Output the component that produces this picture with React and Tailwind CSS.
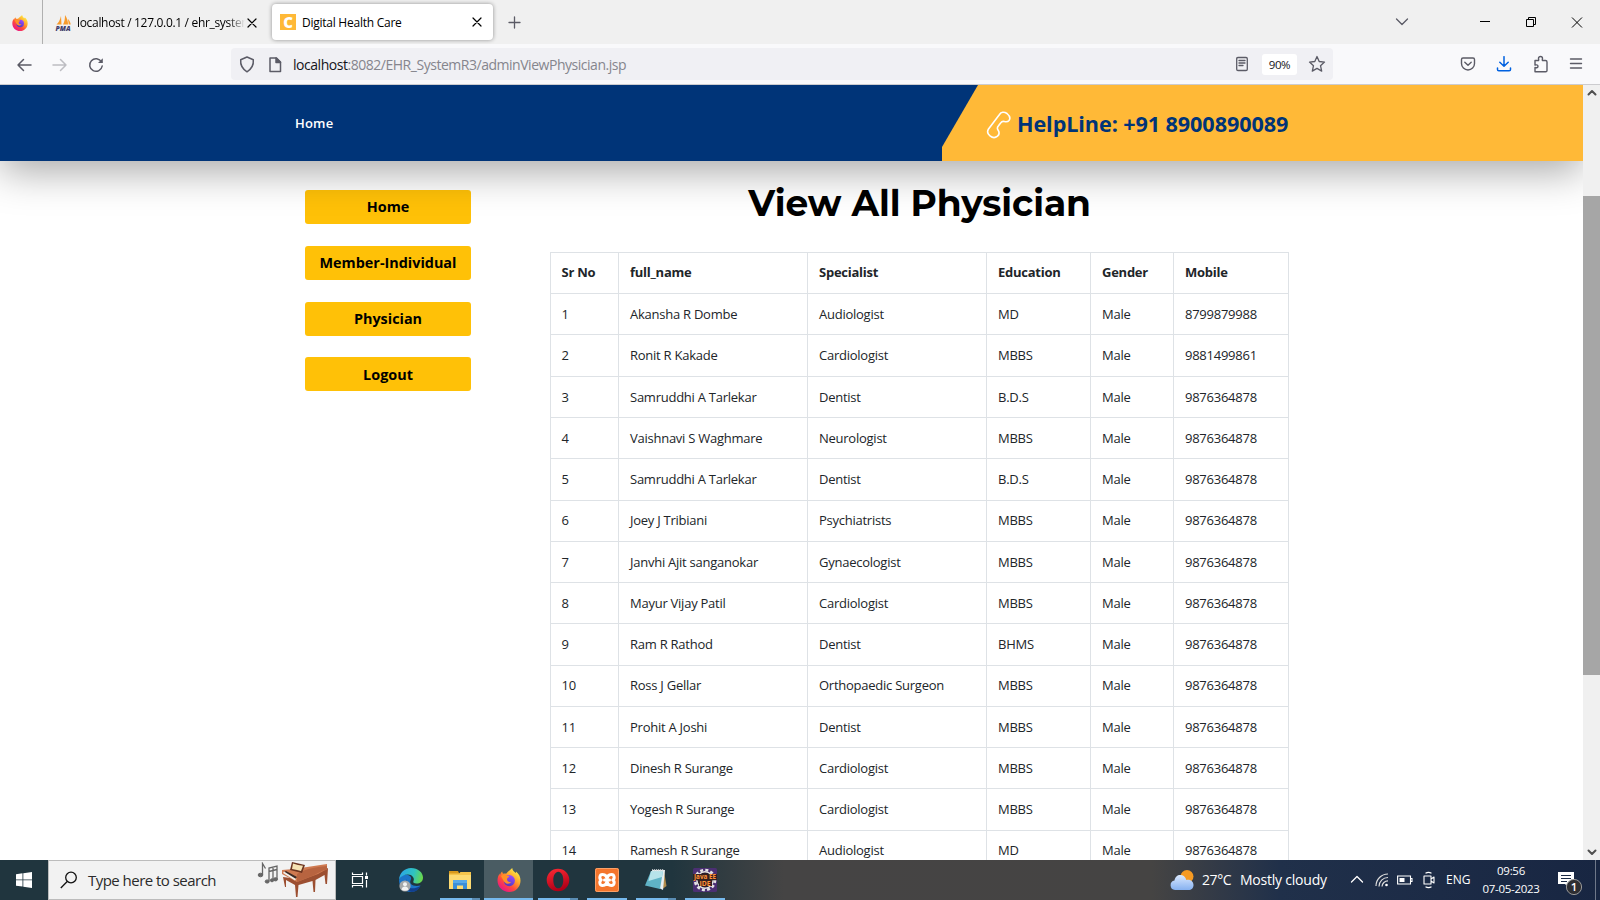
const physicians = [
  ["1", "Akansha R Dombe", "Audiologist", "MD", "Male", "8799879988"],
  ["2", "Ronit R Kakade", "Cardiologist", "MBBS", "Male", "9881499861"],
  ["3", "Samruddhi A Tarlekar", "Dentist", "B.D.S", "Male", "9876364878"],
  ["4", "Vaishnavi S Waghmare", "Neurologist", "MBBS", "Male", "9876364878"],
  ["5", "Samruddhi A Tarlekar", "Dentist", "B.D.S", "Male", "9876364878"],
  ["6", "Joey J Tribiani", "Psychiatrists", "MBBS", "Male", "9876364878"],
  ["7", "Janvhi Ajit sanganokar", "Gynaecologist", "MBBS", "Male", "9876364878"],
  ["8", "Mayur Vijay Patil", "Cardiologist", "MBBS", "Male", "9876364878"],
  ["9", "Ram R Rathod", "Dentist", "BHMS", "Male", "9876364878"],
  ["10", "Ross J Gellar", "Orthopaedic Surgeon", "MBBS", "Male", "9876364878"],
  ["11", "Prohit A Joshi", "Dentist", "MBBS", "Male", "9876364878"],
  ["12", "Dinesh R Surange", "Cardiologist", "MBBS", "Male", "9876364878"],
  ["13", "Yogesh R Surange", "Cardiologist", "MBBS", "Male", "9876364878"],
  ["14", "Ramesh R Surange", "Audiologist", "MD", "Male", "9876364878"],
];
const columns = ["Sr No", "full_name", "Specialist", "Education", "Gender", "Mobile"];

function Line({ d, className = "", w = 1.4, box = "0 0 16 16" }) {
  return (
    <svg viewBox={box} className={className} fill="none" stroke="currentColor" strokeWidth={w} strokeLinecap="round" strokeLinejoin="round">
      <path d={d} />
    </svg>
  );
}

function FirefoxLogo({ className }) {
  return (
    <svg viewBox="0 0 24 24" className={className}>
      <defs>
        <linearGradient id="ffa" x1="0.85" y1="0.1" x2="0.2" y2="0.95">
          <stop offset="0" stopColor="#fff04a" />
          <stop offset="0.35" stopColor="#ffa52a" />
          <stop offset="0.65" stopColor="#ff4a3c" />
          <stop offset="1" stopColor="#e8128a" />
        </linearGradient>
        <linearGradient id="ffb" x1="0.7" y1="0" x2="0.3" y2="1">
          <stop offset="0" stopColor="#a04bff" />
          <stop offset="1" stopColor="#4a3bc0" />
        </linearGradient>
      </defs>
      <path fill="url(#ffa)" d="M15.2 0c.3 2.500 2 3.600 3.600 5 .3-.5.300-1 .2-1.500 3 2.300 4.500 5.500 4.500 9.200C23.500 19 18.500 24 12.200 24 5.600 24 .5 19 .5 12.600c0-3 .9-5.300 2.200-7 0 .7.100 1.200.3 1.700.3-1.400 1-2.800 2.200-3.800.1 1 .4 1.700.9 2.300 1-.3 2-.3 3 0C10.600 3.600 13 2.300 15.200 0z" />
      <circle cx="12.300" cy="12.600" r="5.600" fill="url(#ffb)" />
      <path fill="#ff9226" d="M4 8.200c1.500-1.500 3.300-1.700 5-.8 1 .5 2 .6 3.300.7-.2 1.300-1.800 1.500-2.200 2.700-.3 2.500 1.700 3.700 4.200 3-1.500 2.300-4.500 2.600-6.300.8C6 13 5.500 10 4 8.200z" />
    </svg>
  );
}

function TabStrip() {
  return (
    <div className="flex h-[44px] bg-[#f0f0f0] text-[12px] text-black">
      <div className="flex w-[43px] items-center border-r border-[#b0b0b0] pt-[1px] pl-[12px]">
        <FirefoxLogo className="h-4 w-4" />
      </div>
      <div className="flex w-[229px] items-center pt-[1px] pl-[12px]">
        <svg viewBox="0 0 17 16" className="h-[16px] w-[17px] shrink-0 overflow-visible">
          <path fill="#f79a2b" d="M6 1 6.500 9.500H1.500C3.500 8 5 5 6 1zM10 0c2 3 3 6 3 9.500H8C9.500 7 10 4 10 0zM13 4c2 2 2.500 4 2.700 5.500h-2z" />
          <text x="0.500" y="15.500" fontSize="6.500" fontWeight="800" fontStyle="italic" fontFamily="Open Sans" fill="#3f3c6b" textLength="15" lengthAdjust="spacingAndGlyphs">PMA</text>
        </svg>
        <span className="ml-[5px] w-[168px] overflow-hidden whitespace-nowrap tracking-[-0.320px] [mask-image:linear-gradient(to_right,#000_90%,transparent)]">localhost / 127.0.0.1 / ehr_system</span>
        <Line className="-ml-[1px] h-[16px] w-[16px] shrink-0" w={1.2} d="M4 4l8 8M12 4l-8 8" />
      </div>
      <div className="mt-[4px] flex h-[36px] w-[221px] items-center rounded-[4px] bg-white pl-[8px] shadow-[0_0_4px_rgba(0,0,0,0.4)]">
        <span className="flex h-[16px] w-[16px] items-center justify-center bg-[#ffb937] text-[15px] leading-none font-extrabold text-white">C</span>
        <span className="ml-[6px] w-[167px] pt-[1px] whitespace-nowrap tracking-[-0.25px]">Digital Health Care</span>
        <Line className="h-[16px] w-[16px]" w={1.2} d="M4 4l8 8M12 4l-8 8" />
      </div>
      <Line className="mt-[14px] ml-[13px] h-[16px] w-[16px] text-[#5b5b66]" w={1.3} d="M8.500 3v11M3 8.500h11" />
      <Line className="mt-[14px] ml-[872px] h-[16px] w-[16px] text-[#5b5b66]" w={1.3} d="M2.500 5 8 10.500 13.500 5" />
      <svg viewBox="0 0 16 16" className="mt-[14px] ml-[67px] h-[16px] w-[16px]" stroke="#000"><path d="M3 7.500h10" /></svg>
      <svg viewBox="0 0 16 16" className="mt-[14px] ml-[30px] h-[16px] w-[16px]" stroke="#000" fill="none"><path d="M3.500 5.500h7v7h-7zM5.500 5.500v-2h7v7h-2" /></svg>
      <svg viewBox="0 0 16 16" className="mt-[14px] ml-[30px] h-[16px] w-[16px]" stroke="#000" fill="none"><path d="M3 3.500l10 10M13 3.500l-10 10" /></svg>
    </div>
  );
}

function AddressBar() {
  return (
    <div className="flex h-[41px] items-center border-b border-[#cccccf] bg-[#f9f9fb] text-[#5b5b66]">
      <Line className="mt-[1px] ml-[16px] h-[18px] w-[18px]" box="0 0 18 18" w={1.5} d="M15 9H2M7.500 3.500 2 9l5.500 5.500" />
      <Line className="mt-[1px] ml-[17px] h-[18px] w-[18px] text-[#bdbdc2]" box="0 0 18 18" w={1.5} d="M2 9h13M9.500 3.500 15 9l-5.500 5.500" />
      <svg viewBox="0 0 18 18" className="mt-[1px] ml-[18px] h-[18px] w-[18px]" fill="none" stroke="currentColor" strokeWidth="1.500">
        <path d="M14.500 6A6.300 6.300 0 1 0 15.200 10" strokeLinecap="round" />
        <path d="M15.800 2.200v4.800H11z" fill="currentColor" stroke="none" />
      </svg>
      <div className="ml-[126px] flex h-[32px] w-[1102px] items-center rounded-[4px] bg-[#f0f0f4]">
        <Line className="mt-[1px] ml-[7px] h-[18px] w-[18px]" box="0 0 18 18" w={1.5} d="M9 1 15.300 3.800C15.800 9 13.500 13 9 15.800 4.500 13 2.200 9 2.700 3.800z" />
        <svg viewBox="0 0 16 18" className="mt-[1px] ml-[11px] h-[18px] w-[16px]" fill="none" stroke="currentColor" strokeWidth="1.500" strokeLinejoin="round">
          <path d="M3 2h6.500l4 4V15.500H3z" />
          <path d="M9 2v4.500h4.500z" fill="currentColor" />
        </svg>
        <span className="ml-[10px] w-[932px] pt-[2px] text-[14px] leading-[20px] tracking-[-0.470px] whitespace-nowrap text-[#85858d]"><span className="text-[#15141a]">localhost</span>:8082/EHR_SystemR3/adminViewPhysician.jsp</span>
        <Line className="ml-[9px] h-[16px] w-[16px]" w={1.3} d="M4 1.500h8q1.300 0 1.300 1.300v10.400q0 1.300-1.300 1.300H4q-1.300 0-1.300-1.300V2.800Q2.700 1.500 4 1.500zM5 4.500h6M5 7h6M5 9.500h4" />
        <span className="mt-[1px] ml-[12px] flex h-[21px] w-[35px] items-center justify-center rounded-[3px] bg-white pt-[1px] text-[11.500px] tracking-[-0.400px] text-[#15141a]">90%</span>
        <Line className="ml-[11px] h-[18px] w-[18px]" w={1.3} box="0 0 18 18" d="M9 1.500l2.200 5 5.300.6-4 3.600 1.200 5.400L9 13.400l-4.700 2.700 1.200-5.400-4-3.600 5.300-.6z" />
      </div>
      <Line className="ml-[127px] h-[16px] w-[16px]" w={1.4} d="M3 2h10q1.500 0 1.500 1.500V7.500a6.500 6.500 0 0 1-13 0V3.500Q1.500 2 3 2zM4.800 6.200 8 9.200l3.200-3" />
      <Line className="ml-[20px] h-[16px] w-[16px] text-[#0061e0]" w={1.5} d="M8 .7v9.300M3.800 6.200 8 10.300l4.200-4.100M1.500 12v1.500q0 1.300 1.300 1.300h10.400q1.300 0 1.300-1.300V12" />
      <Line className="ml-[20px] h-[18px] w-[18px]" w={1.4} box="0 0 18 18" d="M3 5.500h3.500c.6-.6 0-1 0-2a2 2 0 0 1 4 0c0 1-.6 1.400 0 2h3q1.500 0 1.500 1.500v8.500q0 1.300-1.300 1.300H3V12.500c1 .3 3 .7 3-1.200s-2-1.500-3-1.200z" />
      <Line className="ml-[18px] h-[16px] w-[16px]" w={1.4} d="M2.500 3h11M2.500 7.500h11M2.500 12h11" />
    </div>
  );
}

function SiteHeader() {
  return (
    <header className="relative flex h-[76px] shrink-0 bg-[#003478] shadow-[0_10px_40px_rgba(0,0,0,0.35)]">
      <a className="w-[942px] pt-[29px] pl-[295px] text-[13px] leading-[18px] font-semibold tracking-[0.2px] text-white">Home</a>
      <div className="relative flex flex-1 pl-[44px]">
        <svg viewBox="0 0 641 76" preserveAspectRatio="none" className="absolute inset-0 h-full w-full"><path fill="#ffb937" d="M36 0H641V76H0V62z" /></svg>
        <svg viewBox="0 0 26 30" className="relative mt-[25px] h-[30px] w-[26px]" fill="none" stroke="#fff" strokeWidth="1.600">
          <path d="M13.500 4.500C15 2 18 1.500 21 3.500c3 2.500 3.500 5 2 7-1.300 1.600-3 1.400-4.700 1-2-.5-2.500-.2-3.500 1.200l-2.500 3.300c-1.200 1.500-1.500 2.200-.3 4 1.300 2 1.600 4.400-.5 6.200-2.500 2-5 1.700-7.500-.3C1.500 24 1 21.500 2.500 19z" strokeLinejoin="round" />
        </svg>
        <span className="relative mt-[24px] ml-[5px] text-[21.600px] leading-[30px] font-bold tracking-[-0.080px] whitespace-nowrap text-[#003478]">HelpLine: +91 8900890089</span>
      </div>
    </header>
  );
}

function SideNav() {
  return (
    <nav className="flex w-[166px] flex-col gap-[21.800px] pt-[29px] text-[14.400px] font-bold text-black">
      {["Home", "Member-Individual", "Physician", "Logout"].map((label) => (
        <a key={label} className="flex h-[34px] items-center justify-center rounded-[3px] bg-[#ffc107] pt-[0.600px] whitespace-nowrap">{label}</a>
      ))}
    </nav>
  );
}

function Row({ cells, head }) {
  return (
    <div className={head ? "grid h-[41.200px] shrink-0 grid-cols-[68px_189px_179px_104px_83px_115px] border-b border-[#dee2e6] pt-0 font-bold" : "grid h-[41.270px] shrink-0 grid-cols-[68px_189px_179px_104px_83px_115px] border-b border-[#dee2e6]"}>
      {cells.map((cell, i) => (
        <div key={i} className={head ? "border-r border-[#dee2e6] pt-[9px] pl-[11px] leading-[20px] whitespace-nowrap first:pl-[10.500px]" : "border-r border-[#dee2e6] pt-[9.800px] pl-[11px] leading-[20px] whitespace-nowrap first:pl-[10.500px]"}>{cell}</div>
      ))}
    </div>
  );
}

function Scrollbar() {
  return (
    <div className="flex w-[17px] flex-col items-center bg-[#f0f0f0] text-[#505050]">
      <Line className="h-[17px] w-[12px]" box="0 0 12 17" w={2} d="M2.500 9.500 6 6l3.500 3.500" />
      <div className="mt-[94px] h-[479px] w-full bg-[#a6a6a6]" />
      <Line className="mt-auto h-[17px] w-[12px]" box="0 0 12 17" w={2} d="M2.500 7.500 6 11l3.500-3.500" />
    </div>
  );
}

function Piano() {
  return (
    <svg viewBox="0 0 72 36" className="h-[36px] w-[72px]">
      <g fill="#666" stroke="#666">
        <path d="M5.500 13V1.500l3 5" fill="none" strokeWidth="1.300" />
        <ellipse cx="3.500" cy="13" rx="2.300" ry="1.800" />
        <path d="M12 19V6l8-2v13M12 9.500l8-2M16 18V6" fill="none" strokeWidth="1.300" />
        <ellipse cx="10.200" cy="19.500" rx="2" ry="1.600" />
        <ellipse cx="15" cy="18.300" rx="1.600" ry="1.500" />
        <ellipse cx="18.500" cy="17.300" rx="2" ry="1.600" />
      </g>
      <path fill="#9c4f31" d="M26 15l2 10 1 0 0-7 9 5 1 12 1.500 0 1-12 14-4 1 11 1.500 0 .5-12 9-5 1 9 1.500 0 1-16-10 5-20 6z" />
      <path fill="#cf7a51" d="M25 8l12-1 33-5v5l-9 5-8 3-13 5-15-8z" />
      <path fill="#b86440" d="M40 12c8-5 18-7 30-8v4c-5 0-8 3-15 6l-15 6z" />
      <path fill="#3a2a26" d="M27 10l11 7 2-2-11-6z" />
      <path fill="#f3efe8" d="M26 11l12 7.500 1-1.500L27 9.500z" />
      <path fill="#6b3420" d="M35 0l13 3-3 8-12-3z" />
      <path fill="#f6e3b4" d="M36 1.500l5 1.500 5 .8-2 5.200-4-1-5-1z" />
    </svg>
  );
}

function AppIcon({ name }) {
  if (name === "edge")
    return (
      <svg viewBox="0 0 24 24" className="h-[24px] w-[24px]">
        <defs>
          <linearGradient id="eg" x1="0" y1="0.3" x2="1" y2="0.5"><stop offset="0" stopColor="#2ba4e8" /><stop offset="0.6" stopColor="#2fc3c0" /><stop offset="1" stopColor="#6ad84a" /></linearGradient>
        </defs>
        <path fill="#1c74c8" d="M0 12C1 8 5 6 9 7c3 1 4 3 2.500 5.500C10 16 14 19 21.500 17.500 19 22 15.500 24 12 24 5 24 0 19 0 12z" />
        <path fill="#123f8e" d="M8 11c-3 6 2 13 13.500 7-3 6-8 6.500-11 5.500C6 21 5 15 8 11z" />
        <path fill="url(#eg)" d="M0 11.500C.5 5 5.500 0 12 0c7 0 12 4.500 12 9.500 0 4-3 6-6.500 6-2.500 0-4-1-3-2.500C16 10 13 6.500 9 6.500c-4 0-7.500 2-9 5z" />
        <circle cx="6" cy="18" r="5.600" fill="#a5a8aa" />
        <circle cx="6" cy="16.200" r="2" fill="#f2f2f2" /><path fill="#f2f2f2" d="M2.500 21.500c.5-4 6.500-4 7 0-2 1.700-5 1.700-7 0z" />
      </svg>
    );
  if (name === "files")
    return (
      <svg viewBox="0 0 24 24" className="h-[24px] w-[24px]">
        <path fill="#d99a1c" d="M1 3h9l1.500 3H1z" /><path fill="#fddb72" d="M1 6h22v15H1z" /><path fill="#f5c54c" d="M1 5.500h10l1.500-1.500H23v3H1z" />
        <path fill="#3b8ed8" d="M5 21v-7h14v7h-4v-3.500H9V21z" /><path fill="#58a9e8" d="M5 12h14v3H5z" />
      </svg>
    );
  if (name === "firefox") return <FirefoxLogo className="h-[24px] w-[24px]" />;
  if (name === "opera")
    return (
      <svg viewBox="0 0 24 24" className="h-[24px] w-[24px]">
        <defs><linearGradient id="op" x1="0" y1="0" x2="0.3" y2="1"><stop offset="0" stopColor="#ff2b35" /><stop offset="1" stopColor="#b00017" /></linearGradient></defs>
        <path fill="url(#op)" fillRule="evenodd" d="M12 .7a11.300 11.300 0 1 1 0 22.600A11.300 11.300 0 0 1 12 .7zM12.300 3.700c-3 0-5 3.600-5 8.300s2 8.300 5 8.300 5-3.600 5-8.300-2-8.300-5-8.300z" />
      </svg>
    );
  if (name === "xampp")
    return (
      <svg viewBox="0 0 24 24" className="h-[24px] w-[24px]">
        <rect width="24" height="24" rx="2" fill="#f4752c" />
        <rect x=".5" y=".5" width="23" height="23" rx="2" fill="none" stroke="#f9a169" />
        <g fill="none" stroke="#fff" strokeWidth="3" strokeLinejoin="round" strokeLinecap="round">
          <path d="M12 12C12 8.500 10.500 6.500 7.500 6.500 4.500 6.500 4 10.500 6.200 12 4 13.500 4.500 17.500 7.500 17.500c3 0 4.500-2 4.500-5.500 0 3.500 1.500 5.500 4.500 5.500s3.500-4 1.300-5.500c2.200-1.500 1.700-5.500-1.300-5.500S12 8.500 12 12z" />
          <path d="M9.500 12h5" />
        </g>
      </svg>
    );
  if (name === "notepad")
    return (
      <svg viewBox="0 0 24 24" className="h-[24px] w-[24px]">
        <path fill="#b08a4a" d="M20 3l2.500 15-4 3z" /><path fill="#e8eef0" d="M8 2h13l-2 20-4-2z" />
        <path fill="#5fb3c6" d="M7 3h12l-3 18L1 17.500z" /><path fill="#b7e3ea" d="M7 3h12l-1 6L4.500 13z" />
        <path d="M8 2.300h12" stroke="#d8dddf" strokeWidth="2" strokeDasharray="1.200 .8" />
      </svg>
    );
  return (
    <svg viewBox="0 0 24 24" className="h-[24px] w-[24px] overflow-visible">
      <rect width="24" height="24" rx="1.500" fill="#4b2f73" />
      <circle cx="12" cy="12" r="10" fill="none" stroke="#e4e4e4" strokeWidth="2.600" strokeDasharray="3 2.236" />
      <circle cx="12" cy="12" r="8.200" fill="#2b1c2c" stroke="#e4e4e4" strokeWidth="1.500" />
      <path fill="#33201f" d="M0 6h24v6.300h-5v5.700H6v-5.700H0z" />
      <text x="1" y="11.300" fontSize="6.500" fontWeight="700" fontFamily="Open Sans" fill="#ff9238" textLength="22" lengthAdjust="spacingAndGlyphs">Java EE</text>
      <text x="6.500" y="17.700" fontSize="6.500" fontWeight="700" fontFamily="Open Sans" fill="#ff9238" textLength="11" lengthAdjust="spacingAndGlyphs">IDE</text>
    </svg>
  );
}

function TaskButton({ name, open, stacked, active }) {
  return (
    <div className={active ? "flex h-full w-[49px] flex-col items-center bg-[#4a5c63]" : "flex h-full w-[49px] flex-col items-center"}>
      <div className="mt-[8px] h-[24px]"><AppIcon name={name} /></div>
      {open && (
        <div className={active ? "mt-auto flex h-[2px] w-full" : "mt-auto flex h-[2px] w-[40px]"}>
          <div className="flex-1 bg-[#76b9ed]" />
          {stacked && <div className="w-[8px] bg-[#5b8db4]" />}
        </div>
      )}
    </div>
  );
}

function Taskbar() {
  return (
    <footer className="flex h-[40px] shrink-0 items-center bg-[linear-gradient(90deg,#20353e_0%,#20353e_42%,#454444_49%,#454443_72%,#20304a_80%,#182642_100%)] text-white">
      <div className="flex w-[48px] justify-center">
        <svg viewBox="0 0 16 16" className="h-[16px] w-[16px]" fill="#fff"><path d="M0 2.200 6.500 1.300V7.500H0zM7.300 1.200 16 0v7.500H7.300zM0 8.300h6.500v6.300L0 13.700zM7.300 8.300H16V16l-8.700-1.200z" /></svg>
      </div>
      <div className="flex h-[40px] w-[288px] items-center border border-[#bcbcbc] bg-[#f2f2f2] text-black">
        <svg viewBox="0 0 18 18" className="ml-[11px] h-[18px] w-[18px]" fill="none" stroke="#111" strokeWidth="1.300"><circle cx="11" cy="6.500" r="5.300" /><path d="M7.200 10.500 .8 17" /></svg>
        <span className="ml-[10px] w-[169px] text-[15px] leading-[20px] tracking-[-0.530px] whitespace-nowrap text-[#2b2b2b]">Type here to search</span>
        <Piano />
      </div>
      <div className="flex w-[49px] justify-center pr-[2px]">
        <svg viewBox="0 0 18 18" className="h-[18px] w-[18px]" fill="none" stroke="#fff" strokeWidth="1.200"><path d="M1.500 5.500h10v7h-10zM1.500 1.500v2h10v-2M1.500 16.500v-2h10v2M15.500 1.500v3M15.500 9v7.500" /><path d="M14 5h3v3h-3z" fill="#fff" stroke="none" /></svg>
      </div>
      <div className="flex h-full w-[344px]">
        <div className="ml-[1px] flex h-full">
          <TaskButton name="edge" />
          <TaskButton name="files" open stacked />
          <TaskButton name="firefox" open active />
          <TaskButton name="opera" open stacked />
          <TaskButton name="xampp" open />
          <TaskButton name="notepad" open stacked />
          <TaskButton name="eclipse" open />
        </div>
      </div>
      <div className="ml-auto flex h-full items-center">
        <svg viewBox="0 0 24 22" className="h-[22px] w-[24px]">
          <defs><linearGradient id="cl" x1="0" y1="0" x2="0" y2="1"><stop offset="0" stopColor="#dbe9ff" /><stop offset="1" stopColor="#86b1f0" /></linearGradient></defs>
          <circle cx="17" cy="7.500" r="6.500" fill="#f59a23" />
          <path fill="url(#cl)" d="M5 21a4.800 4.800 0 0 1-.5-9.500C5 7.500 8 5.500 11 6c3 .3 4.800 2.500 5.300 5 4-1 7.200 1.500 7.200 5 0 3-2 5-5 5z" />
        </svg>
        <span className="ml-[8px] w-[38px] pb-[1px] text-[14px] tracking-[-0.400px] whitespace-nowrap">27°C</span>
        <span className="w-[109px] pb-[1px] text-[14px] tracking-[-0.220px] whitespace-nowrap">Mostly cloudy</span>
        <Line className="h-[16px] w-[16px]" w={1.3} d="M2.500 10 8 4.500l5.500 5.500" />
        <svg viewBox="0 0 14 14" className="ml-[10px] h-[14px] w-[14px]" fill="none" stroke="#ddd" strokeWidth="1.200"><path d="M1 13A12 12 0 0 1 13 1M4 13.500a9 9 0 0 1 9-9M7 13.500a6 6 0 0 1 6-5.700" /><circle cx="11.500" cy="12" r="1.300" fill="#fff" stroke="none" /></svg>
        <svg viewBox="0 0 16 12" className="ml-[8px] h-[12px] w-[16px]" fill="none" stroke="#fff" strokeWidth="1.100"><path d="M.6 2h12.900v8H.6zM13.500 4.500H15v3h-1.500" /><path d="M2.500 4h5v4h-5z" fill="#fff" stroke="none" /></svg>
        <svg viewBox="0 0 12 18" className="ml-[10px] h-[18px] w-[12px]" fill="none" stroke="#fff" strokeWidth="1.100"><path d="M1 5h7v8H1zM8 8l3-2v6l-3-2M2.500 2.300q3-1.800 6 0M2.500 15.700q3 1.800 6 0" strokeLinejoin="round" /></svg>
        <span className="ml-[11px] w-[35px] text-[12px] whitespace-nowrap">ENG</span>
        <div className="w-[60px] text-center text-[11.500px] leading-[18px] tracking-[-0.3px] whitespace-nowrap"><div>09:56</div><div>07-05-2023</div></div>
        <div className="ml-[17px] h-[30px] w-[37px]">
          <svg viewBox="0 0 26 30" className="h-[30px] w-[26px]"><path fill="#fff" d="M0 7h16v12h-5v4l-4-4H0z" /><path d="M3 10.500h10M3 13.500h10M3 16.500h6" stroke="#1b2a45" /><circle cx="16" cy="22" r="7.600" fill="#2e2e32" stroke="#999" /><text x="16" y="26" textAnchor="middle" fontSize="11.500" fontWeight="600" fontFamily="Open Sans" fill="#fff">1</text></svg>
        </div>
        <div className="mr-[4px] h-full w-px bg-[#6f7889]" />
      </div>
    </footer>
  );
}

export default function App() {
  return (
    <div className="flex h-[900px] w-[1600px] flex-col overflow-hidden bg-white font-['Open_Sans','Noto_Sans',sans-serif]">
      <TabStrip />
      <AddressBar />
      <div className="flex min-h-0 flex-1">
        <div className="flex w-[1583px] flex-col overflow-hidden">
          <div className="relative flex flex-col"><SiteHeader /></div>
          <main className="flex flex-1 pl-[305px]">
            <SideNav />
            <section className="ml-[79px] w-[739px]">
              <h1 className="mt-[20px] h-[71px] text-center font-[Montserrat,Inter,sans-serif] text-[36px] leading-[44px] font-bold tracking-[-0.100px] whitespace-nowrap text-black">View All Physician</h1>
              <div className="border-t border-l border-[#dee2e6] text-[13px] tracking-[-0.250px] text-[#212529]">
                <Row cells={columns} head />
                {physicians.map((p) => <Row key={p[0]} cells={p} />)}
              </div>
            </section>
          </main>
        </div>
        <Scrollbar />
      </div>
      <Taskbar />
    </div>
  );
}
